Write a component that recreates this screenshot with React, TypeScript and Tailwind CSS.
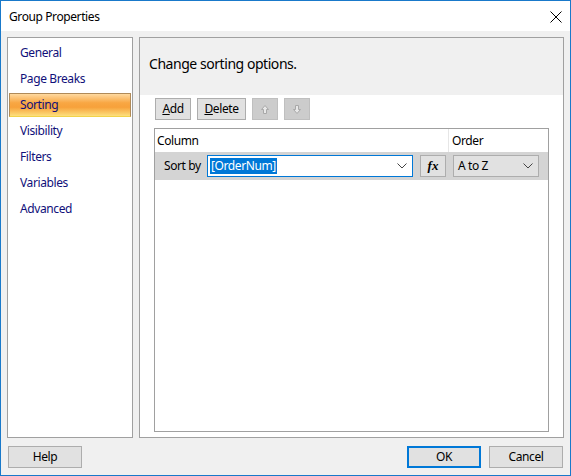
import React from 'react';

const navItems = ['General', 'Page Breaks', 'Sorting', 'Visibility', 'Filters', 'Variables', 'Advanced'];

const Chevron = () => (
  <svg width="10" height="6" viewBox="0 0 10 6" className="shrink-0">
    <path d="M0.5 0.5 L5 5 L9.5 0.5" fill="none" stroke="#444" strokeWidth="1" />
  </svg>
);

export default function App() {
  return (
    <div
      className="w-[571px] h-[476px] flex flex-col border border-[#1979ca] bg-[#f0f0f0] text-[12px] tracking-[-0.4px] text-black"
      style={{ fontFamily: '"Noto Sans", "Open Sans", sans-serif' }}
    >
      {/* Title bar */}
      <div className="h-[30px] bg-white flex items-center justify-between pl-[8px] pr-[6px] pt-[1px] shrink-0">
        <span>Group Properties</span>
        <svg width="12" height="12" viewBox="0 0 12 12" className="mr-[2px]">
          <path d="M0.5 0.5 L11.5 11.5 M11.5 0.5 L0.5 11.5" stroke="#000" strokeWidth="1" />
        </svg>
      </div>

      {/* Body */}
      <div className="flex-1 flex gap-[6px] pt-[6px] px-[6px]">
        {/* Nav */}
        <div className="w-[126px] h-[401px] bg-white border border-[#a0a0a0] pt-[2px] px-[1px]">
          {navItems.map((item) =>
            item === 'Sorting' ? (
              <div
                key={item}
                className="h-[24px] my-[1px] flex items-center pl-[10px] text-[#10107a] border border-[#b08a58] border-b-[#f2d34a] bg-[linear-gradient(#fed9a0_0%,#f8a743_40%,#f7a13b_60%,#fde07e_100%)]"
              >
                {item}
              </div>
            ) : (
              <div key={item} className="h-[26px] flex items-center pl-[11px] text-[#10107a]">
                {item}
              </div>
            )
          )}
        </div>

        {/* Content panel */}
        <div className="flex-1 h-[401px] border border-[#a0a0a0] flex flex-col">
          <div className="h-[57px] bg-[#f0f0f0] pl-[9px] pt-[15px] text-[14px] tracking-[-0.45px]">
            Change sorting options.
          </div>
          <div className="flex-1 bg-white flex flex-col px-[14px] pb-[5px]">
            <div className="flex pl-[1px] pt-[3px] h-[33px]">
              <button className="h-[22px] w-[36px] border border-[#adadad] bg-[#e1e1e1]">
                <span className="underline">A</span>dd
              </button>
              <button className="ml-[6px] h-[22px] w-[49px] border border-[#adadad] bg-[#e1e1e1]">
                <span className="underline">D</span>elete
              </button>
              <button className="ml-[6px] h-[22px] w-[26px] border border-[#bfbfbf] bg-[#cccccc] flex items-center justify-center">
                <svg width="8" height="9" viewBox="0 0 8 9">
                  <path d="M4 0.5 L7.5 4.5 L5.5 4.5 L5.5 8.5 L2.5 8.5 L2.5 4.5 L0.5 4.5 Z" fill="#e8e8e8" stroke="#a8a8a8" />
                </svg>
              </button>
              <button className="ml-[6px] h-[22px] w-[26px] border border-[#bfbfbf] bg-[#cccccc] flex items-center justify-center">
                <svg width="8" height="9" viewBox="0 0 8 9">
                  <path d="M4 8.5 L7.5 4.5 L5.5 4.5 L5.5 0.5 L2.5 0.5 L2.5 4.5 L0.5 4.5 Z" fill="#e8e8e8" stroke="#a8a8a8" />
                </svg>
              </button>
            </div>

            {/* Grid */}
            <div className="flex-1 border border-[#a0a0a0] flex flex-col">
              <div className="h-[23px] flex">
                <div className="w-[294px] border-r border-[#e6e6e6] pl-[2px] flex items-center">Column</div>
                <div className="flex-1 pl-[3px] flex items-center">Order</div>
              </div>
              <div className="h-[28px] bg-[#d4d4d4] flex items-center">
                <span className="w-[52px] pl-[9px] shrink-0">Sort by</span>
                <div className="w-[206px] h-[22px] bg-white border border-[#0078d7] flex items-center pl-[2px] pr-[5px] justify-between">
                  <span className="bg-[#0078d7] text-white px-[1px] leading-[16px]">[OrderNum]</span>
                  <Chevron />
                </div>
                <button className="ml-[7px] w-[26px] h-[22px] border border-[#adadad] bg-[#e1e1e1] flex items-center justify-center">
                  <span className="italic font-bold text-[13px] tracking-normal" style={{ fontFamily: '"Liberation Serif", serif' }}>
                    fx
                  </span>
                </button>
                <div className="ml-[7px] w-[86px] h-[22px] border border-[#adadad] bg-[#e1e1e1] flex items-center justify-between pl-[4px] pr-[5px]">
                  <span>A to Z</span>
                  <Chevron />
                </div>
              </div>
              <div className="flex-1" />
            </div>
          </div>
        </div>
      </div>

      {/* Footer */}
      <div className="h-[37px] flex items-start justify-between px-[7px] pt-[8px] shrink-0">
        <button className="w-[74px] h-[22px] border border-[#adadad] bg-[#e1e1e1]">Help</button>
        <div className="flex gap-[8px]">
          <button className="w-[74px] h-[22px] border-2 border-[#0078d7] bg-[#e1e1e1]">OK</button>
          <button className="w-[74px] h-[22px] border border-[#adadad] bg-[#e1e1e1]">Cancel</button>
        </div>
      </div>
    </div>
  );
}
